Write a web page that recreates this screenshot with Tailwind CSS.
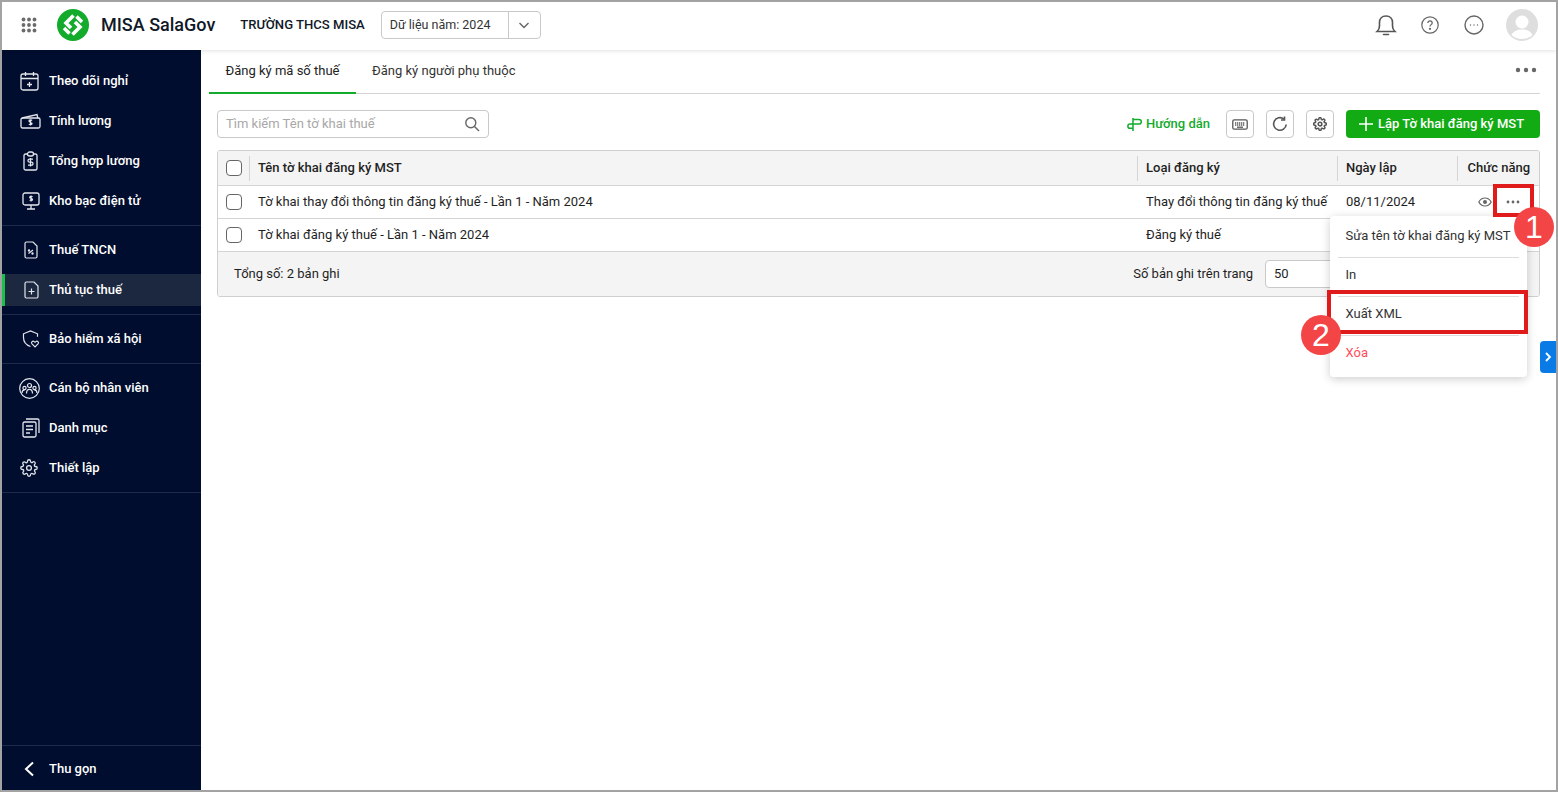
<!DOCTYPE html>
<html lang="en">
<head>
    <meta charset="UTF-8">
    <meta name="viewport" content="width=device-width, initial-scale=1.0">
    <title>MISA SalaGov</title>
    <script src="https://cdn.jsdelivr.net/npm/@tailwindcss/browser@4"></script>
</head>
<body class="bg-white">
    <div class="relative flex flex-col w-[1558px] h-[792px] overflow-hidden border-2 border-[#a3a3a3] font-['Roboto',sans-serif] text-[13px] text-[#1f1f1f]">

        <!-- top bar -->
        <header class="relative z-10 flex items-center h-[48px] pb-[2px] shrink-0 bg-white shadow-[0_1px_4px_rgba(0,0,0,0.12)]">
            <svg class="ml-[19px]" width="16" height="16" viewBox="0 0 16 16" fill="#6b6b6b">
                <circle cx="2.5" cy="2.5" r="1.9"/><circle cx="8" cy="2.5" r="1.9"/><circle cx="13.5" cy="2.5" r="1.9"/>
                <circle cx="2.5" cy="8" r="1.9"/><circle cx="8" cy="8" r="1.9"/><circle cx="13.5" cy="8" r="1.9"/>
                <circle cx="2.5" cy="13.5" r="1.9"/><circle cx="8" cy="13.5" r="1.9"/><circle cx="13.5" cy="13.5" r="1.9"/>
            </svg>
            <svg class="ml-[20px]" width="32" height="32" viewBox="0 0 32 32">
                <circle cx="16" cy="16" r="16" fill="#13ab2c"/>
                <g fill="none" stroke="#fff" stroke-width="3.6" stroke-linejoin="miter">
                    <path d="M16.5 6.500L9 14l5 5"/>
                    <path d="M15.500 25.500L23 18l-5-5"/>
                    <path d="M19.500 7.500L25 13"/>
                    <path d="M12.500 24.500L7 19"/>
                </g>
            </svg>
            <span class="ml-[12px] text-[18px] font-medium text-[#111827] leading-none">MISA SalaGov</span>
            <span class="ml-[25px] text-[13.1px] font-medium text-[#111827]">TRƯỜNG THCS MISA</span>
            <div class="ml-[16px] flex items-center w-[160px] h-[28px] border border-[#c9c9c9] rounded">
                <span class="flex-1 pl-2 text-[12.500px] text-[#333]">Dữ liệu năm: 2024</span>
                <span class="flex items-center justify-center w-[32px] h-full border-l border-[#c9c9c9]">
                    <svg width="12" height="12" viewBox="0 0 12 12" fill="none" stroke="#666" stroke-width="1.4"><path d="M1.5 4l4.5 4.5L10.500 4"/></svg>
                </span>
            </div>
            <div class="ml-auto flex items-center pr-[18px]">
                <svg width="22" height="24" viewBox="0 0 22 24" fill="none" stroke="#555" stroke-width="1.6">
                    <path d="M2 18.500h18c-1.800-1.500-2.500-3-2.500-5.500V9.500C17.500 5.500 15 3 11 3S4.500 5.500 4.500 9.500V13c0 2.500-.7 4-2.500 5.500z"/>
                    <path d="M8.500 21.500h5" stroke-linecap="round"/>
                </svg>
                <svg class="ml-[24px]" width="18" height="18" viewBox="0 0 18 18" fill="none" stroke="#666" stroke-width="1.2">
                    <circle cx="9" cy="9" r="8.200"/>
                    <path d="M6.800 7c0-1.300 1-2.200 2.200-2.200s2.200.9 2.200 2.100c0 1.800-2.200 1.700-2.200 3.500"/>
                    <circle cx="9" cy="12.800" r=".5" fill="#666"/>
                </svg>
                <svg class="ml-[25px]" width="20" height="20" viewBox="0 0 20 20" fill="none" stroke="#666" stroke-width="1.400">
                    <circle cx="10" cy="10" r="9"/>
                    <circle cx="6.500" cy="10" r=".7" fill="#666" stroke="none"/><circle cx="10" cy="10" r=".7" fill="#666" stroke="none"/><circle cx="13.500" cy="10" r=".7" fill="#666" stroke="none"/>
                </svg>
                <svg class="ml-[22px]" width="32" height="32" viewBox="0 0 32 32">
                    <circle cx="16" cy="16" r="16" fill="#dedede"/>
                    <circle cx="16" cy="13" r="6.500" fill="#fff"/>
                    <path d="M5.500 26c2-4 6-5.500 10.500-5.500S24.500 22 26.500 26c-2.500 2.500-6.500 4-10.500 4s-8-1.500-10.500-4z" fill="#fff"/>
                </svg>
            </div>
        </header>

        <div class="flex flex-1 min-h-0">
            <!-- left menu -->
            <aside class="flex flex-col w-[199px] shrink-0 bg-[#000d2e] text-white font-medium">
                <div class="flex flex-col pt-[11px] pb-[4px] border-b border-[#1e2a47]">
                    <a class="flex items-center h-8 my-1 pl-[18px] gap-[10px]">
                        <svg width="19" height="20" viewBox="0 0 19 20" fill="none" stroke="#e4e6ec" stroke-width="1.300"><rect x="1" y="3" width="17" height="16" rx="2"/><path d="M1 7.500h17M5.500 1v4M13.500 1v4M9.500 11v5M7 13.500h5"/></svg>
                        <span>Theo dõi nghỉ</span>
                    </a>
                    <a class="flex items-center h-8 my-1 pl-[18px] gap-[8px]">
                        <svg width="21" height="16" viewBox="0 0 21 16" fill="none" stroke="#e4e6ec" stroke-width="1.300"><path d="M2 5l15-3.500.8 3.500"/><rect x="1" y="5" width="19" height="10" rx="1.500"/><path d="M12 7.500c-.5-.7-3-1-3 .6 0 1.500 3 .8 3 2.400 0 1.500-2.500 1.300-3 .5M10.500 6.500v6"/></svg>
                        <span>Tính lương</span>
                    </a>
                    <a class="flex items-center h-8 my-1 pl-[21px] gap-[11px]">
                        <svg width="15" height="20" viewBox="0 0 15 20" fill="none" stroke="#e4e6ec" stroke-width="1.300"><path d="M4.500 3H2.500A1.500 1.500 0 0 0 1 4.500v13A1.500 1.500 0 0 0 2.500 19h10a1.500 1.500 0 0 0 1.500-1.500v-13A1.500 1.500 0 0 0 12.500 3h-2"/><rect x="4.500" y="1" width="6" height="4" rx="2"/><path d="M10 8.200H6.500a1.400 1.400 0 0 0 0 3h2a1.400 1.400 0 0 1 0 3H5"/><path d="M7.500 7v8.500"/></svg>
                        <span>Tổng hợp lương</span>
                    </a>
                    <a class="flex items-center h-8 my-1 pl-[20px] gap-[9px]">
                        <svg width="18" height="18" viewBox="0 0 18 18" fill="none" stroke="#e4e6ec" stroke-width="1.300"><rect x="1" y="1" width="16" height="12" rx="2"/><path d="M9 13v3.500M5 17h8"/><path d="M10.500 4.800c-.5-.6-2.800-.8-2.800.5 0 1.300 2.800.8 2.800 2.200 0 1.300-2.300 1.100-2.800.4M9 3.500V9.500"/></svg>
                        <span>Kho bạc điện tử</span>
                    </a>
                </div>
                <div class="flex flex-col pt-[4px] pb-[4px] border-b border-[#1e2a47]">
                    <a class="flex items-center h-8 my-1 pl-[22px] gap-[11px]">
                        <svg width="14" height="18" viewBox="0 0 14 18" fill="none" stroke="#e4e6ec" stroke-width="1.200"><path d="M1 2.500A1.500 1.500 0 0 1 2.500 1H9l4 4v10.500a1.500 1.500 0 0 1-1.500 1.500h-9A1.500 1.500 0 0 1 1 15.500z"/><path d="M4.500 12.500L9 9"/><circle cx="5" cy="9.500" r=".6"/><circle cx="8.500" cy="12.500" r=".6"/></svg>
                        <span>Thuế TNCN</span>
                    </a>
                    <a class="relative flex items-center h-8 my-1 pl-[22px] gap-[10px] bg-[#1c2740]">
                        <span class="absolute left-0 top-0 bottom-0 w-[3px] bg-[#19c34a]"></span>
                        <svg width="15" height="18" viewBox="0 0 15 18" fill="none" stroke="#e4e6ec" stroke-width="1.200"><path d="M1 2.500A1.500 1.500 0 0 1 2.500 1H10l4 4v10.500a1.500 1.500 0 0 1-1.500 1.500h-10A1.500 1.500 0 0 1 1 15.500z"/><path d="M7.500 7.500v6M4.500 10.500h6"/></svg>
                        <span>Thủ tục thuế</span>
                    </a>
                </div>
                <div class="flex flex-col pt-[4px] pb-[4px] border-b border-[#1e2a47]">
                    <a class="flex items-center h-8 my-1 pl-[20px] gap-[9px]">
                        <svg width="18" height="18" viewBox="0 0 18 18" fill="none" stroke="#e4e6ec" stroke-width="1.200"><path d="M8.500 16.500C4 15 1.500 12 1.500 7.500V3.800L8.500 1l7 2.800v3"/><path d="M13 16.800l-3-3c-1.400-1.600.8-3.500 2.200-2.200l.8.700.8-.7c1.400-1.300 3.600.6 2.200 2.200z"/></svg>
                        <span>Bảo hiểm xã hội</span>
                    </a>
                </div>
                <div class="flex flex-col pt-[4px] pb-[4px] border-b border-[#1e2a47]">
                    <a class="flex items-center h-8 my-1 pl-[17px] gap-[9px]">
                        <svg width="21" height="21" viewBox="0 0 21 21" fill="none" stroke="#e4e6ec" stroke-width="1.200"><circle cx="10.500" cy="10.500" r="9.800"/><circle cx="10.500" cy="7.500" r="2"/><circle cx="5.500" cy="10" r="1.600"/><circle cx="15.500" cy="10" r="1.600"/><path d="M7.500 15.500c0-3 1-4.200 3-4.200s3 1.200 3 4.200M3 15c0-2 1-2.800 2.500-2.800M18 15c0-2-1-2.800-2.500-2.800"/></svg>
                        <span>Cán bộ nhân viên</span>
                    </a>
                    <a class="flex items-center h-8 my-1 pl-[20px] gap-[9px]">
                        <svg width="18" height="20" viewBox="0 0 18 20" fill="none" stroke="#e4e6ec" stroke-width="1.300"><rect x="1" y="4" width="13" height="15" rx="1.500"/><path d="M4 1h11.500A1.500 1.500 0 0 1 17 2.500V15M4 8h7M4 11.500h7M4 15h4"/></svg>
                        <span>Danh mục</span>
                    </a>
                    <a class="flex items-center h-8 my-1 pl-[18px] gap-[11px]">
                        <svg width="18" height="18" viewBox="0 0 24 24" fill="none" stroke="#e4e6ec" stroke-width="1.700"><circle cx="12" cy="12" r="3.200"/><path d="M19.400 15a1.650 1.650 0 0 0 .33 1.820l.06.06a2 2 0 1 1-2.830 2.830l-.06-.06a1.650 1.650 0 0 0-2.800 1.170V21a2 2 0 1 1-4 0v-.09A1.650 1.650 0 0 0 7.300 19.700l-.06.06a2 2 0 1 1-2.830-2.830l.06-.06A1.650 1.650 0 0 0 3.300 14H3a2 2 0 1 1 0-4h.09A1.650 1.650 0 0 0 4.300 7.300l-.06-.06a2 2 0 1 1 2.830-2.830l.06.06A1.650 1.650 0 0 0 10 3.300V3a2 2 0 1 1 4 0v.09a1.650 1.650 0 0 0 2.800 1.170l.06-.06a2 2 0 1 1 2.830 2.830l-.06.06A1.650 1.650 0 0 0 20.700 10H21a2 2 0 1 1 0 4h-.09a1.650 1.650 0 0 0-1.510 1z"/></svg>
                        <span>Thiết lập</span>
                    </a>
                </div>
                <div class="mt-auto flex items-center h-[45px] pt-[2px] border-t border-[#1e2a47] pl-[21px] gap-[14px]">
                    <svg width="12" height="16" viewBox="0 0 12 16" fill="none" stroke="#fff" stroke-width="2"><path d="M10 1.500L3 8l7 6.500"/></svg>
                    <span>Thu gọn</span>
                </div>
            </aside>

            <!-- content -->
            <main class="flex-1 min-w-0 pl-[8px] pr-[16px]">
                <div class="relative flex h-[44px] border-b border-[#d4d4d4]">
                    <div class="flex items-center justify-center w-[147px] h-[44px] border-b-2 border-[#13ab2c] text-[#222]">Đăng ký mã số thuế</div>
                    <div class="flex items-center justify-center ml-[16px] h-[44px] pb-[2px] text-[#333]">Đăng ký người phụ thuộc</div>
                    <svg class="ml-auto mt-[17px] mr-[3px]" width="22" height="6" viewBox="0 0 22 6" fill="#666"><circle cx="3" cy="3" r="2.200"/><circle cx="11" cy="3" r="2.200"/><circle cx="19" cy="3" r="2.200"/></svg>
                </div>

                <div class="flex items-center h-[28px] mt-[16px] ml-[8px]">
                    <div class="flex items-center w-[272px] h-[28px] border border-[#c9c9c9] rounded px-2">
                        <span class="flex-1 text-[#a8a8a8]">Tìm kiếm Tên tờ khai thuế</span>
                        <svg width="16" height="16" viewBox="0 0 16 16" fill="none" stroke="#666" stroke-width="1.400"><circle cx="6.800" cy="6.800" r="5"/><path d="M10.500 10.500L15 15"/></svg>
                    </div>
                    <svg class="ml-auto" width="15" height="13" viewBox="0 0 15 13" fill="none" stroke="#13ab2c" stroke-width="1.500"><path d="M6 0v13M6 1.500h6a2.300 2.300 0 0 1 0 4.600H3a2.100 2.100 0 0 0 0 4.200h3"/></svg>
                    <span class="ml-[4px] font-medium text-[#13ab2c]">Hướng dẫn</span>
                    <button class="flex items-center justify-center ml-[16px] w-[28px] h-[28px] border border-[#c9c9c9] rounded">
                        <svg width="16" height="11" viewBox="0 0 16 11" fill="none" stroke="#555" stroke-width="1.300"><rect x=".8" y=".8" width="14.400" height="9.400" rx="1.500"/><path d="M3 4h10M3 6h10" stroke-width="1.500" stroke-dasharray="1.300 .7"/><path d="M5 8.200h6"/></svg>
                    </button>
                    <button class="flex items-center justify-center ml-[12px] w-[28px] h-[28px] border border-[#c9c9c9] rounded">
                        <svg width="16" height="16" viewBox="0 0 16 16" fill="none" stroke="#555" stroke-width="1.600"><path d="M14.200 8.500A6.300 6.300 0 1 1 11.800 3"/><path d="M12.500.5V4H9"/></svg>
                    </button>
                    <button class="flex items-center justify-center ml-[12px] w-[28px] h-[28px] border border-[#c9c9c9] rounded">
                        <svg width="14" height="14" viewBox="0 0 24 24" fill="none" stroke="#555" stroke-width="2.600"><circle cx="12" cy="12" r="3.200"/><path d="M19.400 15a1.650 1.650 0 0 0 .33 1.820l.06.06a2 2 0 1 1-2.830 2.830l-.06-.06a1.650 1.650 0 0 0-2.800 1.170V21a2 2 0 1 1-4 0v-.09A1.650 1.650 0 0 0 7.300 19.700l-.06.06a2 2 0 1 1-2.830-2.830l.06-.06A1.650 1.650 0 0 0 3.300 14H3a2 2 0 1 1 0-4h.09A1.650 1.650 0 0 0 4.300 7.300l-.06-.06a2 2 0 1 1 2.830-2.830l.06.06A1.650 1.650 0 0 0 10 3.300V3a2 2 0 1 1 4 0v.09a1.650 1.650 0 0 0 2.800 1.170l.06-.06a2 2 0 1 1 2.830 2.830l-.06.06A1.650 1.650 0 0 0 20.700 10H21a2 2 0 1 1 0 4h-.09a1.650 1.650 0 0 0-1.510 1z"/></svg>
                    </button>
                    <button class="flex items-center justify-center gap-[5px] ml-[12px] w-[194px] h-[28px] pr-[3px] rounded bg-[#13ab14] text-white font-medium">
                        <svg width="14" height="14" viewBox="0 0 14 14" stroke="#fff" stroke-width="1.600"><path d="M7 0v14M0 7h14"/></svg>
                        Lập Tờ khai đăng ký MST
                    </button>
                </div>

                <div class="mt-[12px] ml-[8px] border border-[#cfcfcf] rounded-[3px] overflow-hidden">
                    <div class="flex items-center h-[35px] bg-[#f4f4f4] border-b border-[#d4d4d4] font-medium">
                        <div class="flex items-center w-[32px] h-[25px] pl-[8px] border-r border-[#d4d4d4]"><span class="block w-4 h-4 border border-[#666] rounded-[4px] bg-white"></span></div>
                        <div class="flex items-center w-[888px] h-[25px] pl-[8px] border-r border-[#d4d4d4]">Tên tờ khai đăng ký MST</div>
                        <div class="flex items-center w-[200px] h-[25px] pl-[8px] border-r border-[#d4d4d4]">Loại đăng ký</div>
                        <div class="flex items-center w-[120px] h-[25px] pl-[8px] border-r border-[#d4d4d4]">Ngày lập</div>
                        <div class="flex items-center flex-1 h-[25px] pl-[9.500px]">Chức năng</div>
                    </div>
                    <div class="flex items-center h-[33px] border-b border-[#d4d4d4]">
                        <div class="w-[32px] pl-[8px]"><span class="block w-4 h-4 border border-[#666] rounded-[4px]"></span></div>
                        <div class="w-[888px] pl-[8px]">Tờ khai thay đổi thông tin đăng ký thuế - Lần 1 - Năm 2024</div>
                        <div class="w-[200px] pl-[8px]">Thay đổi thông tin đăng ký thuế</div>
                        <div class="w-[120px] pl-[8px]">08/11/2024</div>
                        <div class="flex items-center flex-1 pl-[20px] gap-[14px]">
                            <svg width="14" height="10" viewBox="0 0 14 10" fill="none" stroke="#666" stroke-width="1.200"><path d="M.8 5C2.300 2.200 4.500 1 7 1s4.700 1.200 6.200 4C11.700 7.800 9.500 9 7 9S2.300 7.800.8 5z"/><circle cx="7" cy="5" r="2" fill="#666" stroke="none"/></svg>
                            <svg width="14" height="4" viewBox="0 0 14 4" fill="#666"><circle cx="2" cy="2" r="1.400"/><circle cx="7" cy="2" r="1.400"/><circle cx="12" cy="2" r="1.400"/></svg>
                        </div>
                    </div>
                    <div class="flex items-center h-[33px] border-b border-[#d4d4d4]">
                        <div class="w-[32px] pl-[8px]"><span class="block w-4 h-4 border border-[#666] rounded-[4px]"></span></div>
                        <div class="w-[888px] pl-[8px]">Tờ khai đăng ký thuế - Lần 1 - Năm 2024</div>
                        <div class="w-[200px] pl-[8px]">Đăng ký thuế</div>
                    </div>
                    <div class="flex items-center h-[44px] bg-[#f4f4f4] pl-[16px]">
                        <span>Tổng số: 2 bản ghi</span>
                        <span class="ml-auto">Số bản ghi trên trang</span>
                        <div class="flex items-center ml-[12px] mr-[204px] w-[70px] h-[28px] pl-[8px] bg-white border border-[#c9c9c9] rounded">50</div>
                    </div>
                </div>
            </main>
        </div>

        <!-- row action menu -->
        <div class="absolute left-[1328px] top-[214px] w-[197px] h-[161px] bg-white rounded shadow-[0_2px_10px_rgba(0,0,0,0.2)] text-[#333]">
            <div class="flex items-center h-[41px] pb-[2px] pl-[15.500px]">Sửa tên tờ khai đăng ký MST</div>
            <div class="mx-2 border-t border-[#dcdcdc]"></div>
            <div class="flex items-center h-[38px] pb-[4px] pl-[15.500px]">In</div>
            <div class="mx-2 border-t border-[#dcdcdc]"></div>
            <div class="flex items-center h-[38px] pb-[4px] pl-[15.500px]">Xuất XML</div>
            <div class="mx-2 border-t border-[#dcdcdc]"></div>
            <div class="flex items-center h-[38px] pb-[4px] pl-[15.500px] text-[#ff4d5a]">Xóa</div>
        </div>

        <!-- annotations -->
        <div class="absolute left-[1491px] top-[182px] w-[41px] h-[33px] border-4 border-[#e01b1b]"></div>
        <div class="absolute left-[1325px] top-[288px] w-[201px] h-[44px] border-4 border-[#e01b1b]"></div>
        <div class="absolute left-[1512px] top-[205px] flex items-center justify-center w-[40px] h-[40px] rounded-full bg-[#f44546] text-white text-[32px] leading-none font-['Liberation_Sans',sans-serif]">1</div>
        <div class="absolute left-[1299px] top-[313px] flex items-center justify-center w-[40px] h-[40px] rounded-full bg-[#f44546] text-white text-[32px] leading-none font-['Liberation_Sans',sans-serif]">2</div>

        <!-- side handle -->
        <div class="absolute right-0 top-[339px] flex items-center justify-center w-[16px] h-[32px] bg-[#0a7be6] rounded-l">
            <svg width="8" height="12" viewBox="0 0 8 12" fill="none" stroke="#fff" stroke-width="1.800"><path d="M2 2l4 4-4 4"/></svg>
        </div>
    </div>
</body>
</html>
